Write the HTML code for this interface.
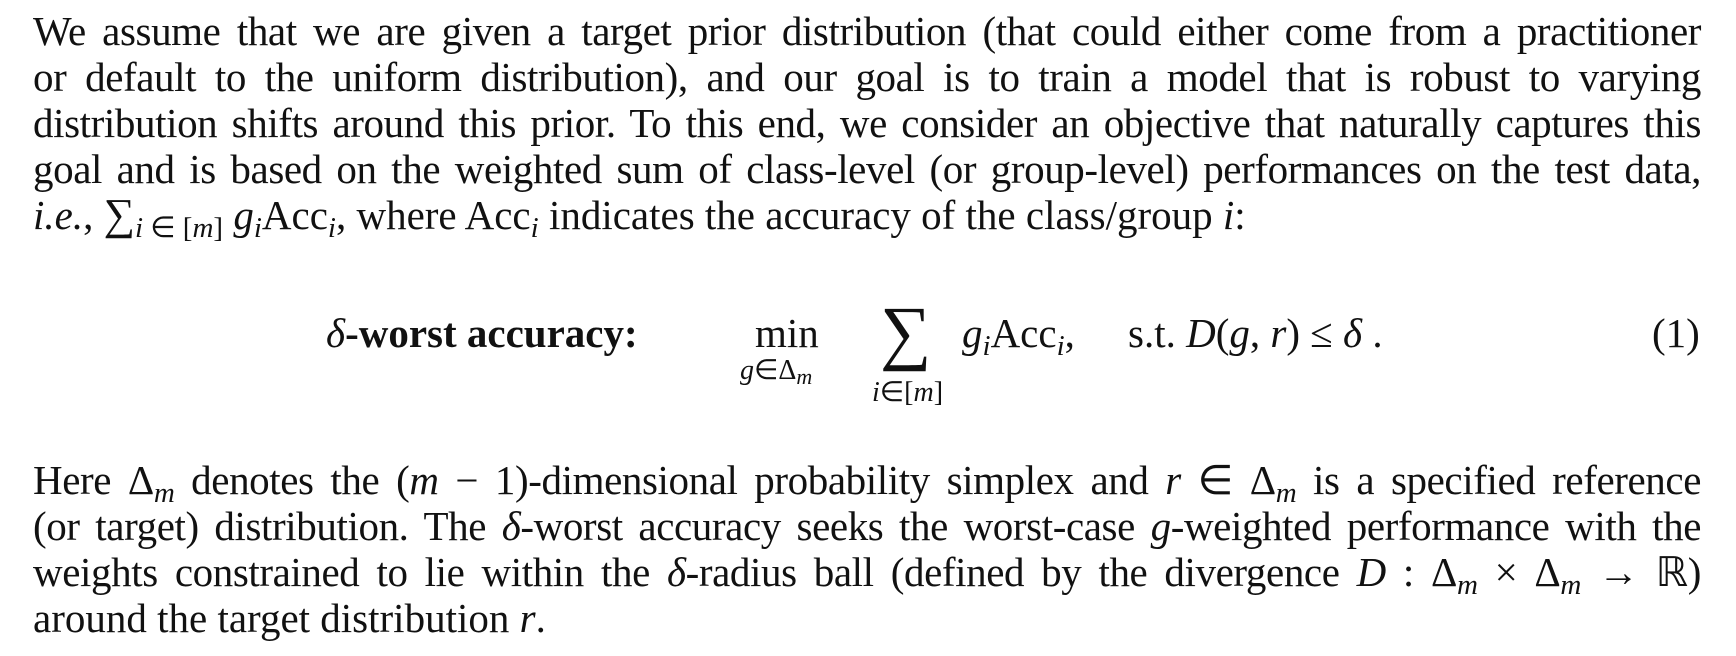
<!DOCTYPE html>
<html><head><meta charset="utf-8"><style>
body{margin:0;width:1736px;height:656px;background:#fff;position:relative;overflow:hidden;font-family:"Liberation Serif","Times New Roman",serif;color:#111;}
.l{position:absolute;left:33px;width:1668px;font-size:41px;letter-spacing:-0.4px;line-height:46px;white-space:nowrap;}
.n{letter-spacing:0;}
.j{text-align:justify;text-align-last:justify;white-space:normal;}
i{font-style:italic;}
sub{font-size:29px;vertical-align:-8px;line-height:0;}
.a{position:absolute;font-size:41px;line-height:46px;white-space:nowrap;}
.s{position:absolute;font-size:28px;line-height:30px;white-space:nowrap;}
</style></head><body>
<div class="l j" style="top:8px">We assume that we are given a target prior distribution (that could either come from a practitioner</div>
<div class="l j" style="top:54px">or default to the uniform distribution), and our goal is to train a model that is robust to varying</div>
<div class="l j" style="top:100px">distribution shifts around this prior. To this end, we consider an objective that naturally captures this</div>
<div class="l j" style="top:146px">goal and is based on the weighted sum of class-level (or group-level) performances on the test data,</div>
<div class="l n" style="top:192px"><i>i.e.</i>, <span style="font-size:44px">∑</span><sub><i>i</i> ∈ [<i>m</i>]</sub> <i>g<sub>i</sub></i>Acc<sub><i>i</i></sub>, where Acc<sub><i>i</i></sub> indicates the accuracy of the class/group <i>i</i>:</div>

<div class="a" style="left:326px;top:310px"><i>δ</i><b>-worst accuracy:</b></div>
<div class="a" style="left:755px;top:310px">min</div>
<div class="s" style="left:740px;top:356px"><i>g</i>∈Δ<sub style="font-size:22px;vertical-align:-5px"><i>m</i></sub></div>
<div class="a" style="left:880px;top:292px;font-size:72px;line-height:80px">∑</div>
<div class="s" style="left:872px;top:378px"><i>i</i>∈[<i>m</i>]</div>
<div class="a" style="left:962px;top:310px"><i>g<sub>i</sub></i>Acc<sub><i>i</i></sub>,</div>
<div class="a" style="left:1128px;top:310px">s.t. <i>D</i>(<i>g</i>, <i>r</i>) ≤ <i>δ</i> .</div>
<div class="a" style="left:1652px;top:310px">(1)</div>

<div class="l j" style="top:457px">Here Δ<sub><i>m</i></sub> denotes the (<i>m</i> − 1)-dimensional probability simplex and <i>r</i> ∈ Δ<sub><i>m</i></sub> is a specified reference</div>
<div class="l j" style="top:503px">(or target) distribution. The <i>δ</i>-worst accuracy seeks the worst-case <i>g</i>-weighted performance with the</div>
<div class="l j" style="top:549px">weights constrained to lie within the <i>δ</i>-radius ball (defined by the divergence <i>D</i> : Δ<sub><i>m</i></sub> × Δ<sub><i>m</i></sub> → ℝ)</div>
<div class="l n" style="top:595px">around the target distribution <i>r</i>.</div>
</body></html>
